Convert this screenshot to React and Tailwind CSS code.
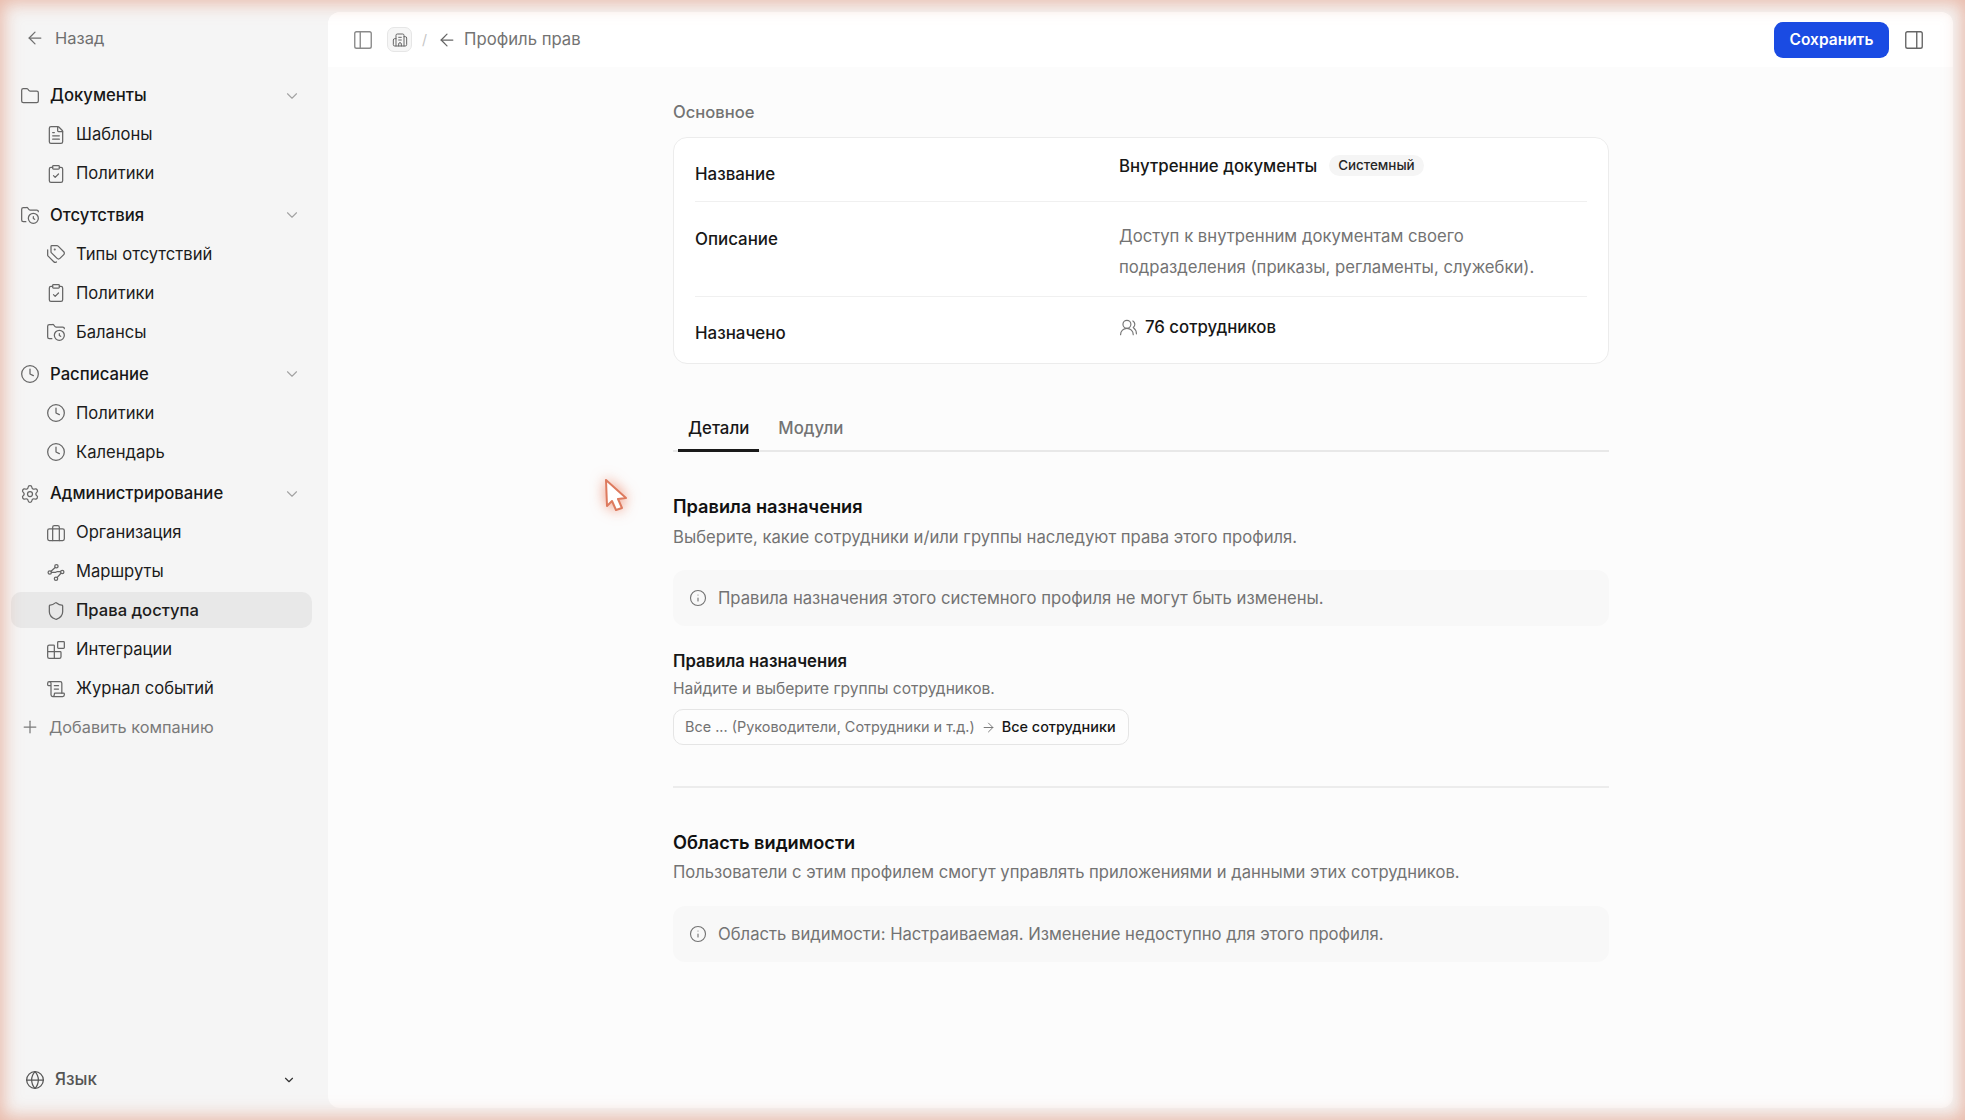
import React from 'react';
import {
  ArrowLeft, ArrowRight, Blocks, Building2, ChevronDown, ClipboardCheck, Clock, FileText, Folder, FolderClock,
  Globe, Info, PanelLeft, PanelRight, Plus, ScrollText, Settings, Shield, Tags, UsersRound,
} from 'lucide-react';

// lucide has no briefcase with two inner uprights
function CaseIcon({ className }) {
  return (
    <svg className={className} viewBox="0 0 24 24" fill="none" stroke="currentColor" strokeWidth="1.5" strokeLinecap="round" strokeLinejoin="round">
      <rect x="2" y="7" width="20" height="14" rx="2" />
      <path d="M8 21V5a2 2 0 0 1 2-2h4a2 2 0 0 1 2 2v16" />
    </svg>
  );
}

function RoutesIcon({ className }) {
  return (
    <svg className={className} viewBox="0 0 24 24" fill="none" stroke="currentColor" strokeWidth="1.5" strokeLinecap="round" strokeLinejoin="round">
      <circle cx="4.5" cy="12.5" r="2" />
      <circle cx="12.5" cy="5" r="2" />
      <circle cx="19.5" cy="12" r="2" />
      <circle cx="12" cy="20" r="2" />
      <path d="M6 11l5-4.5M6.5 12.5h4c1.5 0 2-1 3-1h4M18 13.5l-4.5 5" />
    </svg>
  );
}

const NAV = [
  {
    title: 'Документы', icon: Folder, items: [
      { label: 'Шаблоны', icon: FileText },
      { label: 'Политики', icon: ClipboardCheck },
    ],
  },
  {
    title: 'Отсутствия', icon: FolderClock, items: [
      { label: 'Типы отсутствий', icon: Tags },
      { label: 'Политики', icon: ClipboardCheck },
      { label: 'Балансы', icon: FolderClock },
    ],
  },
  {
    title: 'Расписание', icon: Clock, items: [
      { label: 'Политики', icon: Clock },
      { label: 'Календарь', icon: Clock },
    ],
  },
  {
    title: 'Администрирование', icon: Settings, items: [
      { label: 'Организация', icon: CaseIcon },
      { label: 'Маршруты', icon: RoutesIcon },
      { label: 'Права доступа', icon: Shield, active: true },
      { label: 'Интеграции', icon: Blocks },
      { label: 'Журнал событий', icon: ScrollText },
    ],
  },
];

function Sidebar() {
  return (
    <aside className="w-[328px] shrink-0 flex flex-col pl-[11px] pr-[16px] pt-[12px] pb-[22px]">
      <div className="h-[52px] flex items-center gap-[10px] pl-[14px] text-[#6f6f6f]">
        <ArrowLeft className="w-[20px] h-[20px]" strokeWidth={1.5} />
        <span className="text-[16.5px]">Назад</span>
      </div>
      <div className="mt-[12px] flex flex-col">
        {NAV.map(group => (
          <div key={group.title} className="mb-[2.8px]">
            <div className="h-[39px] flex items-center pl-[9px] pr-[11px]">
              <group.icon className="w-[20px] h-[20px] text-[#666666] mr-[10px]" strokeWidth={1.5} />
              <span className="text-[16.7px] font-medium text-[#171717] flex-1">{group.title}</span>
              <ChevronDown className="w-[18px] h-[18px] text-[#a3a3a3]" strokeWidth={1.5} />
            </div>
            {group.items.map(item => (
              <div key={item.label} className={`h-[39px] flex items-center pl-[35px] ${item.active ? 'relative' : ''}`}>
                {item.active && <div className="absolute left-0 right-0 top-[1px] h-[36px] rounded-[10px] bg-[#e8e8e8]" />}
                <item.icon className="relative w-[20px] h-[20px] text-[#666666] mr-[10px]" strokeWidth={1.5} />
                <span className={`relative text-[16.6px] text-[#1c1c1c] ${item.active ? 'font-medium' : ''}`}>{item.label}</span>
              </div>
            ))}
          </div>
        ))}
        <div className="h-[36px] -mt-[2px] flex items-center pl-[9px] text-[#7a7a7a]">
          <Plus className="w-[20px] h-[20px] mr-[9px]" strokeWidth={1.5} />
          <span className="text-[16.3px]">Добавить компанию</span>
        </div>
      </div>
      <div className="mt-auto h-[36px] flex items-center pl-[14px] pr-[16px] text-[#555555]">
        <Globe className="w-[20px] h-[20px] mr-[10px]" strokeWidth={1.5} />
        <span className="text-[17px] font-medium flex-1">Язык</span>
        <ChevronDown className="w-[14px] h-[14px] text-[#333333]" strokeWidth={2} />
      </div>
    </aside>
  );
}

function Header() {
  return (
    <header className="h-[55px] shrink-0 bg-white flex items-center pl-[24px] pr-[28px]">
      <PanelLeft className="w-[22px] h-[22px] text-[#8a8a8a]" strokeWidth={1.5} />
      <div className="ml-[13px] w-[25px] h-[25px] rounded-[7px] border border-[#e6e6e6] bg-[#f6f6f6] flex items-center justify-center">
        <Building2 className="w-[16px] h-[16px] text-[#666666]" strokeWidth={1.5} />
      </div>
      <span className="ml-[10px] text-[14px] text-[#c4c4c4]">/</span>
      <ArrowLeft className="ml-[10px] w-[20px] h-[20px] text-[#666666]" strokeWidth={1.5} />
      <span className="ml-[7px] text-[16.7px] text-[#737373]">Профиль прав</span>
      <button className="ml-auto w-[115px] h-[36px] rounded-[9px] bg-[#1a4be3] text-white text-[15.5px] font-semibold">Сохранить</button>
      <PanelRight className="ml-[14px] w-[22px] h-[22px] text-[#666666]" strokeWidth={1.5} />
    </header>
  );
}

function Notice({ children }) {
  return (
    <div className="flex items-center gap-[11px] rounded-[12px] bg-[#f8f8f8] px-[16px] h-[56px] text-[16.65px] text-[#737373]">
      <Info className="w-[18px] h-[18px] shrink-0" strokeWidth={1.5} />
      <span>{children}</span>
    </div>
  );
}

function Overview() {
  return (
    <div className="mt-[13px] rounded-[14px] border border-[#ececec] bg-white px-[21px]">
      <div className="h-[64px] grid grid-cols-[424px_1fr] border-b border-[#f0f0f0]">
        <div className="pt-[23.5px] text-[16.9px] font-medium text-[#171717] leading-[24px]">Название</div>
        <div className="pt-[16px] flex items-start leading-[24px]">
          <span className="text-[16.8px] font-medium text-[#171717]">Внутренние документы</span>
          <span className="ml-[12px] mt-[1px] h-[21px] px-[9px] rounded-full bg-[#f5f5f5] text-[13.4px] font-medium text-[#262626] leading-[21px]">Системный</span>
        </div>
      </div>
      <div className="h-[95px] grid grid-cols-[424px_1fr] border-b border-[#f0f0f0]">
        <div className="pt-[24.5px] text-[16.9px] font-medium text-[#171717] leading-[24px]">Описание</div>
        <div className="pt-[19px] text-[16.7px] text-[#737373] leading-[31px]">
          Доступ к внутренним документам своего<br />подразделения (приказы, регламенты, служебки).
        </div>
      </div>
      <div className="h-[66px] grid grid-cols-[424px_1fr]">
        <div className="pt-[24px] text-[16.9px] font-medium text-[#171717] leading-[24px]">Назначено</div>
        <div className="pt-[18px] flex items-center self-start gap-[7px] leading-[24px]">
          <UsersRound className="w-[19px] h-[19px] text-[#777777]" strokeWidth={1.5} />
          <span className="text-[16.8px] font-medium text-[#171717]">76 сотрудников</span>
        </div>
      </div>
    </div>
  );
}

export default function App() {
  return (
    <div className="relative w-[1965px] h-[1120px] overflow-hidden flex bg-[#f5f5f5] font-['Inter',sans-serif]">
      <Sidebar />
      <main className="my-[12px] mr-[12px] flex-1 min-w-0 rounded-[12px] bg-[#fcfcfc] flex flex-col overflow-hidden">
        <Header />
        <div className="w-[936px] ml-[345px]">
          <div className="pt-[33px] text-[16.6px] font-medium text-[#737373] leading-[24px]">Основное</div>
          <Overview />

          <div className="mt-[46px] flex h-[42px] border-b-2 border-[#e8e8e8] pl-[5px] text-[16.8px]">
            <div className="h-[42px] px-[10px] border-b-[3px] border-[#1a1a1a] font-medium text-[#171717] leading-[36px]">Детали</div>
            <div className="h-[42px] ml-[19px] text-[#737373] font-medium leading-[36px]">Модули</div>
          </div>

          <h2 className="mt-[42px] text-[18.2px] font-semibold text-[#111111] leading-[24px]">Правила назначения</h2>
          <p className="mt-[7px] text-[16.65px] text-[#737373] leading-[24px]">Выберите, какие сотрудники и/или группы наследуют права этого профиля.</p>
          <div className="mt-[21px]">
            <Notice>Правила назначения этого системного профиля не могут быть изменены.</Notice>
          </div>

          <h3 className="mt-[23px] text-[16.7px] font-semibold text-[#171717] leading-[24px]">Правила назначения</h3>
          <p className="mt-[6px] text-[15.6px] text-[#737373] leading-[20px]">Найдите и выберите группы сотрудников.</p>
          <div className="mt-[10px] inline-flex items-center h-[36px] rounded-[10px] border border-[#e5e5e5] bg-[#fdfdfd] pl-[11px] pr-[12px] text-[14.45px]">
            <span className="text-[#737373]">Все ... (Руководители, Сотрудники и т.д.)</span>
            <ArrowRight className="mx-[6px] w-[15px] h-[15px] text-[#737373]" strokeWidth={1.5} />
            <span className="font-medium text-[#171717]">Все сотрудники</span>
          </div>

          <div className="mt-[41px] h-[2px] bg-[#ececec]" />

          <h2 className="mt-[42px] text-[18.2px] font-semibold text-[#111111] leading-[24px]">Область видимости</h2>
          <p className="mt-[6px] text-[16.6px] text-[#737373] leading-[24px]">Пользователи с этим профилем смогут управлять приложениями и данными этих сотрудников.</p>
          <div className="mt-[22px]">
            <Notice>Область видимости: Настраиваемая. Изменение недоступно для этого профиля.</Notice>
          </div>
        </div>
      </main>

      {/* mouse cursor from the recording */}
      <svg className="absolute left-[600px] top-[476px] w-[30px] h-[38px] overflow-visible drop-shadow-[0_0_7px_rgba(232,90,50,0.65)]" viewBox="0 0 30 38">
        <path d="M6 4 L7 30 L12 25 L16 34 L22 32 L18 23 L26 22 Z" fill="#ffffff" stroke="#dd7a5e" strokeWidth="2" strokeLinejoin="round" />
      </svg>

      {/* recording glow round the window */}
      <div className="absolute inset-0 pointer-events-none shadow-[inset_0_0_18px_3px_rgba(226,150,125,0.65)]" />
    </div>
  );
}
